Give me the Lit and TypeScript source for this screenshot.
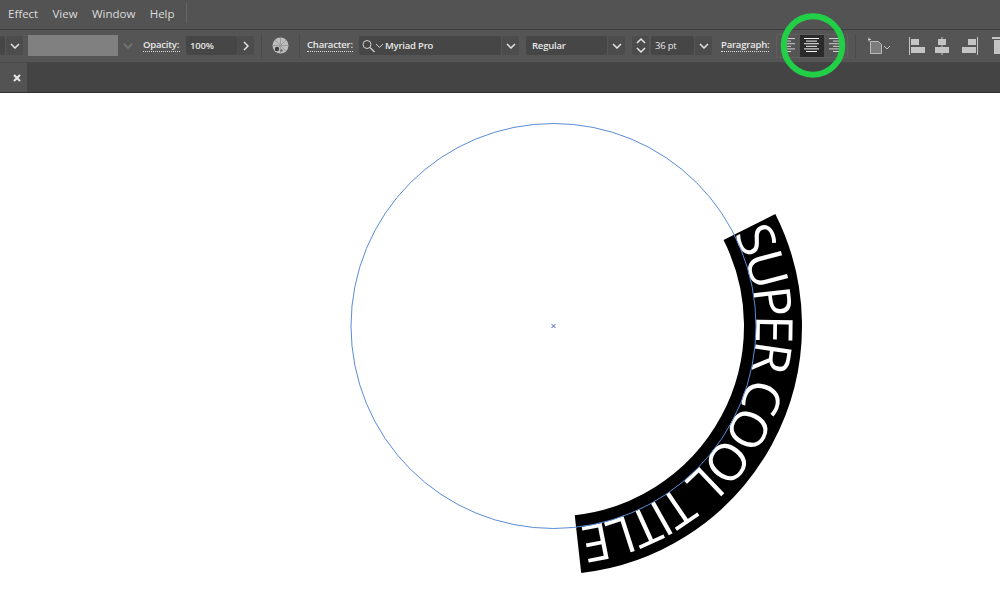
import { LitElement, html, css, svg } from 'lit';
import { customElement } from 'lit/decorators.js';

const chevron = html`<svg width="10" height="6" viewBox="0 0 10 6"><path d="M1 1l4 4 4-4" fill="none" stroke="#e4e4e4" stroke-width="1.5"/></svg>`;

// point on the text circle, angle in degrees, clockwise from east
const CX = 553.5;
const CY = 326;
function pt(r: number, deg: number) {
  const a = (deg * Math.PI) / 180;
  return `${(CX + r * Math.cos(a)).toFixed(2)} ${(CY + r * Math.sin(a)).toFixed(2)}`;
}
function arc(r: number, from: number, to: number) {
  return `M${pt(r, from)} A${r} ${r} 0 0 1 ${pt(r, to)}`;
}

@customElement('app-root')
export class AppRoot extends LitElement {
  static styles = css`
    :host {
      display: block;
      position: relative;
      width: 1000px;
      height: 600px;
      overflow: hidden;
      background: #fff;
      font-family: "Open Sans", "Liberation Sans", sans-serif;
      color: #e6e6e6;
    }
    .menubar {
      height: 29px;
      box-sizing: border-box;
      background: #535353;
      display: flex;
      align-items: center;
      padding: 0 0 3px 8px;
      font-size: 11.5px;
      color: #dcdcdc;
    }
    .menubar span { margin-right: 14.3px; }
    .menubar span.last { margin-right: 11px; }
    .menubar i {
      width: 1px;
      height: 20px;
      background: #666;
    }
    .toolbar {
      height: 34px;
      box-sizing: border-box;
      border-top: 1px solid #3d3d3d;
      border-bottom: 1px solid #474747;
      background: #555555;
      display: flex;
      align-items: center;
      font-size: 9.5px;
      letter-spacing: -0.2px;
      font-weight: 600;
      padding-bottom: 1px;
    }
    .field {
      height: 19px;
      box-sizing: border-box;
      background: #464646;
      display: flex;
      align-items: center;
      padding-left: 4px;
      border-radius: 2px;
      white-space: nowrap;
      flex: none;
    }
    .btn {
      height: 19px;
      background: #4c4c4c;
      display: flex;
      align-items: center;
      justify-content: center;
      border-radius: 2px;
      flex: none;
    }
    .label {
      border-bottom: 1px dotted #d8d8d8;
      line-height: 12px;
      color: #e8e8e8;
      white-space: nowrap;
      flex: none;
    }
    .sep {
      width: 1px;
      height: 24px;
      background: #4b4b4b;
      flex: none;
    }
    .swatch {
      width: 90px;
      height: 21px;
      background: #808080;
      margin-left: 5px;
      flex: none;
    }
    .seg {
      width: 72px;
      height: 24px;
      margin-left: 7px;
      box-sizing: border-box;
      border: 1px solid #5f5f5f;
      border-radius: 2px;
      display: flex;
      flex: none;
    }
    .seg div {
      flex: 1;
      display: flex;
      align-items: center;
      justify-content: center;
    }
    .seg .on { background: #2b2b2b; }
    .tabbar {
      height: 30px;
      box-sizing: border-box;
      background: #444444;
      border-bottom: 1px solid #2f2f2f;
      display: flex;
    }
    .tab {
      width: 27px;
      background: #535353;
      display: flex;
      align-items: center;
      justify-content: flex-end;
      padding-right: 6px;
      box-sizing: border-box;
    }
    .canvas {
      display: block;
      width: 1000px;
      height: 507px;
    }
    .ring {
      position: absolute;
      left: 778px;
      top: 10px;
    }
    .title {
      font-family: "Open Sans", sans-serif;
      font-size: 51px;
      fill: #fff;
    }
  `;

  private alignLines(kind: 'left' | 'center' | 'right', color: string, w: number) {
    const widths = [w, w - 4, w, w - 4, w, w - 4];
    return html`<svg width="${w}" height="15" viewBox="0 0 ${w} 15">
      ${widths.map((lw, i) => {
        const x = kind === 'left' ? 0 : kind === 'center' ? (w - lw) / 2 : w - lw;
        return svg`<rect x="${x}" y="${i * 2.6}" width="${lw}" height="1" fill="${color}"/>`;
      })}
    </svg>`;
  }

  private renderToolbar() {
    return html`
      <div class="toolbar">
        <div class="field" style="width:5px;padding:0"></div>
        <div class="btn" style="width:17px;margin-left:1px">${chevron}</div>
        <div class="swatch"></div>
        <div style="width:16px;margin-left:2px;display:flex;justify-content:center;opacity:.25">${chevron}</div>
        <span class="label" style="margin-left:8px;width:37px">Opacity:</span>
        <div class="field" style="width:51px;margin-left:6px">100%</div>
        <div class="btn" style="width:17px">
          <svg width="6" height="10" viewBox="0 0 6 10"><path d="M1 1l4 4-4 4" fill="none" stroke="#e4e4e4" stroke-width="1.5"/></svg>
        </div>
        <div class="sep" style="margin-left:7px"></div>
        <svg style="margin-left:10px;flex:none" width="17" height="17" viewBox="0 0 17 17">
          <circle cx="8.5" cy="8.5" r="8" fill="#bdbdbd"/>
          <path d="M8.5 1v15M1 8.5h15M3 3l11 11M14 3L3 14" stroke="#9c9c9c" stroke-width="1"/>
          <circle cx="5" cy="12" r="2.2" fill="#3f3f3f"/>
          <circle cx="9.5" cy="13.5" r="1.2" fill="#666"/>
        </svg>
        <div class="sep" style="margin-left:10px"></div>
        <span class="label" style="margin-left:7px;width:46px">Character:</span>
        <div class="field" style="width:142px;margin-left:6px;padding-left:2px">
          <svg width="24" height="14" viewBox="0 0 24 14" style="flex:none">
            <circle cx="6" cy="5.5" r="4" fill="none" stroke="#cfcfcf" stroke-width="1"/>
            <path d="M9 8.5l4.5 4.5" stroke="#cfcfcf" stroke-width="1.2"/>
            <path d="M15 5l3.5 3.5L22 5" fill="none" stroke="#cfcfcf" stroke-width="1"/>
          </svg>
          <span>Myriad Pro</span>
        </div>
        <div class="btn" style="width:17px;margin-left:1px">${chevron}</div>
        <div class="field" style="width:81px;margin-left:7px;padding-left:6px">Regular</div>
        <div class="btn" style="width:17px;margin-left:1px">${chevron}</div>
        <div class="btn" style="width:17px;margin-left:7px">
          <svg width="10" height="17" viewBox="0 0 10 17"><path d="M1 6l4-4 4 4M1 11l4 4 4-4" fill="none" stroke="#e4e4e4" stroke-width="1.5"/></svg>
        </div>
        <div class="field" style="width:43px;margin-left:2px;font-weight:400">36 pt</div>
        <div class="btn" style="width:17px;margin-left:1px">${chevron}</div>
        <span class="label" style="margin-left:9px;width:48px">Paragraph:</span>
        <div class="seg">
          <div>${this.alignLines('left', '#cfcfcf', 13)}</div>
          <div class="on">${this.alignLines('center', '#f2f2f2', 15)}</div>
          <div>${this.alignLines('right', '#cfcfcf', 13)}</div>
        </div>
        <div class="sep" style="margin-left:7px"></div>
        <svg style="margin-left:12px;flex:none" width="24" height="18" viewBox="0 0 24 18">
          <path d="M2.5 4.5h8l3 3v9h-11z" fill="#7c7c7c" stroke="#b8b8b8" stroke-width="1"/>
          <path d="M1 0.5v4M-1 2.5h4" stroke="#c8c8c8" stroke-width="1" fill="none"/>
          <path d="M16 9l3 3 3-3" fill="none" stroke="#c4c4c4" stroke-width="1"/>
        </svg>
        <svg style="margin-left:17px;flex:none" width="16" height="18" viewBox="0 0 16 18">
          <rect x="0" y="0" width="1" height="18" fill="#c4c4c4"/>
          <rect x="2" y="2" width="8" height="6" fill="#c4c4c4"/>
          <rect x="2" y="10" width="14" height="6" fill="#c4c4c4"/>
        </svg>
        <svg style="margin-left:9px;flex:none" width="16" height="18" viewBox="0 0 16 18">
          <rect x="7.5" y="0" width="1" height="18" fill="#c4c4c4"/>
          <rect x="4" y="2" width="8" height="6" fill="#c4c4c4"/>
          <rect x="1" y="10" width="14" height="6" fill="#c4c4c4"/>
        </svg>
        <svg style="margin-left:12px;flex:none" width="16" height="18" viewBox="0 0 16 18">
          <rect x="15" y="0" width="1" height="18" fill="#c4c4c4"/>
          <rect x="6" y="2" width="8" height="6" fill="#c4c4c4"/>
          <rect x="0" y="10" width="14" height="6" fill="#c4c4c4"/>
        </svg>
        <svg style="margin-left:14px;flex:none" width="8" height="18" viewBox="0 0 8 18">
          <rect x="0" y="0" width="8" height="2" fill="#c4c4c4"/>
          <rect x="2" y="3" width="6" height="14" fill="#c4c4c4"/>
        </svg>
      </div>
    `;
  }

  render() {
    return html`
      <div class="menubar">
        <span>Effect</span><span>View</span><span>Window</span><span class="last">Help</span><i></i>
      </div>
      ${this.renderToolbar()}
      <div class="tabbar">
        <div class="tab">
          <svg width="8" height="8" viewBox="0 0 8 8"><path d="M1 1l6 6M7 1l-6 6" stroke="#e8e8e8" stroke-width="2"/></svg>
        </div>
      </div>
      <svg class="canvas" viewBox="0 93 1000 507">
        <defs><path id="baseline" d="${arc(202.5, -27, 84)}"/></defs>
        <path d="${arc(219.5, -26.8, 83.6)}" fill="none" stroke="#000" stroke-width="58"/>
        <text class="title">
          <textPath href="#baseline" textLength="388" lengthAdjust="spacing">SUPER COOL TITLE</textPath>
        </text>
        <circle cx="${CX}" cy="${CY}" r="202.5" fill="none" stroke="#5a8cd6" stroke-width="1"/>
        <path d="M${CX - 2} ${CY - 2}l4 4M${CX + 2} ${CY - 2}l-4 4" stroke="#4a60c8" stroke-width="1"/>
      </svg>
      <svg class="ring" width="70" height="71" viewBox="0 0 70 71">
        <circle cx="35" cy="35.5" r="29.3" fill="none" stroke="#21d047" stroke-width="6"/>
      </svg>
    `;
  }
}
